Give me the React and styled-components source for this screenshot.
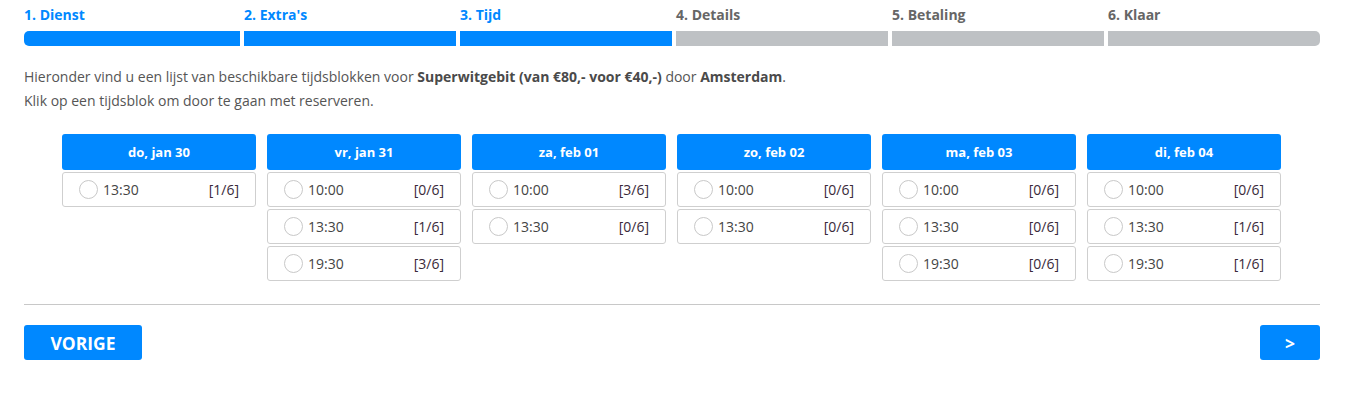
import React from "react";
import styled, { createGlobalStyle } from "styled-components";

const GlobalStyle = createGlobalStyle`
  html, body {
    margin: 0;
    padding: 0;
    background: #fff;
  }
  body {
    font-family: "Open Sans", "Liberation Sans", Arial, sans-serif;
    color: #555;
  }
`;

const BLUE = "#0088ff";

const Page = styled.div`
  padding: 5px 37px 0 24px;
`;

const Steps = styled.div`
  display: flex;
`;

const Step = styled.div`
  box-sizing: border-box;
  flex: 0 0 calc(100% / 6);
  padding-left: ${(p) => (p.$first ? "0" : "4px")};
`;

const StepLabel = styled.div`
  font-size: 14px;
  font-weight: 700;
  line-height: 20px;
  color: ${(p) => (p.$active ? BLUE : "#666")};
  margin-bottom: 6px;
`;

const StepBar = styled.div`
  height: 15px;
  background: ${(p) => (p.$active ? BLUE : "#bec1c4")};
  border-radius: ${(p) =>
    p.$first ? "5px 0 0 5px" : p.$last ? "0 5px 5px 0" : "0"};
`;

const Intro = styled.p`
  margin: 19px 0 0;
  font-size: 14px;
  line-height: 24px;
  color: #555;

  b {
    font-weight: 700;
    color: #4a4a4a;
  }
`;

const Days = styled.div`
  display: flex;
  justify-content: center;
  gap: 11px;
  margin-top: 21px;
  padding-right: 1px;
`;

const DayColumn = styled.div`
  width: 194px;
  display: flex;
  flex-direction: column;
  gap: 2px;
`;

const DayHeader = styled.div`
  height: 36px;
  background: ${BLUE};
  border-radius: 3px;
  color: #fff;
  font-size: 13px;
  font-weight: 700;
  display: flex;
  align-items: center;
  justify-content: center;
`;

const Slot = styled.label`
  box-sizing: border-box;
  height: 35px;
  border: 1px solid #cfcfcf;
  border-radius: 3px;
  display: flex;
  align-items: center;
  padding: 0 16px 0 16px;
  font-size: 14px;
  color: #444;
  cursor: pointer;
`;

const Radio = styled.span`
  box-sizing: border-box;
  width: 19px;
  height: 19px;
  border: 1px solid #c8c8c8;
  border-radius: 50%;
  background: #fff;
  margin-right: 5px;
  flex: none;
`;

const Time = styled.span`
  flex: 1;
`;

const Count = styled.span`
  color: #3a2a3a;
`;

const Divider = styled.hr`
  border: none;
  border-top: 1px solid #c8c8c8;
  margin: 23px 0 20px;
`;

const Footer = styled.div`
  display: flex;
  justify-content: space-between;
`;

const Button = styled.button`
  height: 35px;
  min-width: ${(p) => p.$width};
  border: none;
  border-radius: 3px;
  background: ${BLUE};
  color: #fff;
  font-family: "Open Sans", "Liberation Sans", Arial, sans-serif;
  font-size: 17.5px;
  font-weight: 700;
  text-transform: uppercase;
  cursor: pointer;
  padding: 0 12px;
`;

const steps = [
  { label: "1. Dienst", active: true },
  { label: "2. Extra's", active: true },
  { label: "3. Tijd", active: true },
  { label: "4. Details", active: false },
  { label: "5. Betaling", active: false },
  { label: "6. Klaar", active: false },
];

const days = [
  { title: "do, jan 30", slots: [["13:30", "[1/6]"]] },
  {
    title: "vr, jan 31",
    slots: [
      ["10:00", "[0/6]"],
      ["13:30", "[1/6]"],
      ["19:30", "[3/6]"],
    ],
  },
  {
    title: "za, feb 01",
    slots: [
      ["10:00", "[3/6]"],
      ["13:30", "[0/6]"],
    ],
  },
  {
    title: "zo, feb 02",
    slots: [
      ["10:00", "[0/6]"],
      ["13:30", "[0/6]"],
    ],
  },
  {
    title: "ma, feb 03",
    slots: [
      ["10:00", "[0/6]"],
      ["13:30", "[0/6]"],
      ["19:30", "[0/6]"],
    ],
  },
  {
    title: "di, feb 04",
    slots: [
      ["10:00", "[0/6]"],
      ["13:30", "[1/6]"],
      ["19:30", "[1/6]"],
    ],
  },
];

export default function App() {
  return (
    <>
      <GlobalStyle />
      <Page>
        <Steps>
          {steps.map((s, i) => (
            <Step key={s.label} $first={i === 0}>
              <StepLabel $active={s.active}>{s.label}</StepLabel>
              <StepBar
                $active={s.active}
                $first={i === 0}
                $last={i === steps.length - 1}
              />
            </Step>
          ))}
        </Steps>

        <Intro>
          Hieronder vind u een lijst van beschikbare tijdsblokken voor{" "}
          <b>Superwitgebit (van €80,- voor €40,-)</b> door <b>Amsterdam</b>.
          <br />
          Klik op een tijdsblok om door te gaan met reserveren.
        </Intro>

        <Days>
          {days.map((d) => (
            <DayColumn key={d.title}>
              <DayHeader>{d.title}</DayHeader>
              {d.slots.map(([time, count]) => (
                <Slot key={time}>
                  <Radio />
                  <Time>{time}</Time>
                  <Count>{count}</Count>
                </Slot>
              ))}
            </DayColumn>
          ))}
        </Days>

        <Divider />

        <Footer>
          <Button $width="118px">Vorige</Button>
          <Button $width="60px">&gt;</Button>
        </Footer>
      </Page>
    </>
  );
}
